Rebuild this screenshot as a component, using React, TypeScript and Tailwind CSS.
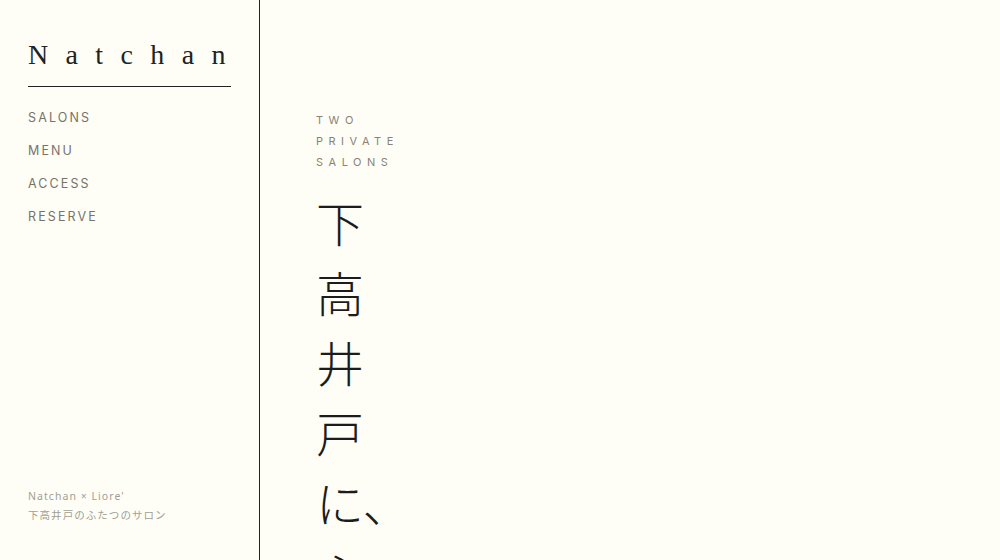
import React from "react";

const NAV = ["SALONS", "MENU", "ACCESS", "RESERVE"];

export default function App() {
  return (
    <div className="flex h-[560px] w-[1000px] overflow-hidden bg-[#fefef6] text-[#222]">
      {/* Sidebar */}
      <aside className="flex h-full w-[260px] shrink-0 flex-col justify-between border-r border-[#222] pl-[28px]">
        <div>
          <div className="mt-[36px] w-[203px] border-b border-[#222] pb-[12px]">
            <h1
              className="text-[28px] leading-[38px] tracking-[0.62em] text-[#222]"
              style={{ fontFamily: '"Liberation Serif", "DejaVu Serif", serif' }}
            >
              Natchan
            </h1>
          </div>
          <nav className="mt-[22px] flex flex-col gap-[15px]">
            {NAV.map((item) => (
              <a
                key={item}
                href="#"
                className="text-[12.5px] leading-[18px] tracking-[0.17em] text-[#77736a]"
                style={{ fontFamily: 'Inter, "Noto Sans", sans-serif' }}
              >
                {item}
              </a>
            ))}
          </nav>
        </div>

        <div
          className="mb-[37px] flex flex-col gap-[3px] text-[10.5px] leading-[16px] tracking-[0.1em] text-[#a29e95]"
          style={{ fontFamily: '"Noto Sans", "Noto Sans CJK JP", sans-serif' }}
        >
          <p>Natchan × Liore'</p>
          <p>下高井戸のふたつのサロン</p>
        </div>
      </aside>

      {/* Main */}
      <main className="flex-1 pl-[56px] pt-[110px]">
        <div
          className="flex flex-col text-[11px] leading-[21px] tracking-[0.5em] text-[#8a8273]"
          style={{ fontFamily: 'Inter, "Noto Sans", sans-serif' }}
        >
          <span>TWO</span>
          <span>PRIVATE</span>
          <span>SALONS</span>
        </div>
        <h2
          className="mt-[13px] w-[52px] text-[48px] font-light leading-[70px] text-[#1c1c1c]"
          style={{ fontFamily: '"Noto Sans CJK JP", sans-serif' }}
        >
          下高井戸に、ふたつのサロン。
        </h2>
      </main>
    </div>
  );
}
